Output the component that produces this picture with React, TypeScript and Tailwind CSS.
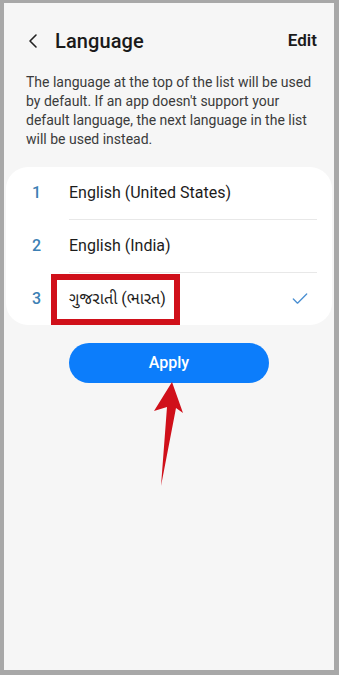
import { ChevronLeft, Check } from 'lucide-react'

const languages = [
  { n: 1, name: 'English (United States)' },
  { n: 2, name: 'English (India)' },
  { n: 3, name: 'ગુજરાતી (ભારત)', selected: true },
]

export default function App() {
  return (
    <div className="w-[339px] h-[675px] bg-[#a8a8a8] pt-[3px] pl-[4px] pr-[5px] pb-[5px] font-['Roboto','Noto_Sans','Noto_Sans_Gujarati',sans-serif]">
      <div className="relative h-full bg-[#f6f6f6] flex flex-col">
        {/* header */}
        <div className="flex items-center h-[42px] mt-[17px] pl-[19px] pr-[17px]">
          <ChevronLeft className="w-[24px] h-[24px] text-[#222] -ml-[2px]" strokeWidth={1.6} />
          <h1 className="ml-[10px] text-[20px] font-medium text-[#1a1a1a] tracking-[0.1px]">Language</h1>
          <span className="ml-auto text-[17px] font-semibold text-[#1a1a1a]">Edit</span>
        </div>

        <p className="mt-[11px] px-[22px] text-[14px] leading-[19px] text-[#3b3b3b]">
          The language at the top of the list will be used by default. If an app doesn't support your default
          language, the next language in the list will be used instead.
        </p>

        {/* list card */}
        <div className="mt-[18px] mx-[2px] bg-white rounded-[22px]">
          {languages.map((l, i) => (
            <div key={l.n}>
              {i > 0 && <div className="ml-[63px] mr-[15px] h-px bg-[#e8e8e8]" />}
              <div className="relative flex items-center h-[52px]">
                <span className="w-[63px] pl-[26px] text-[16px] font-medium text-[#3c7fb4]">{l.n}</span>
                <span className="text-[16px] text-[#1c1c1c]">{l.name}</span>
                {l.selected && (
                  <Check className="ml-auto mr-[22px] w-[20px] h-[20px] text-[#4a8fd2]" strokeWidth={1.6} />
                )}
                {l.selected && (
                  <div className="absolute left-[45px] top-[1px] w-[129px] h-[51px] border-[6px] border-[#d0101a]" />
                )}
              </div>
            </div>
          ))}
        </div>

        <div className="mt-[18px] flex justify-center">
          <button className="w-[200px] h-[40px] rounded-full bg-[#0c7dfb] text-white text-[16px] font-medium">
            Apply
          </button>
        </div>

        {/* annotation arrow */}
        <svg className="absolute left-0 top-0" width="330" height="667" viewBox="0 0 330 667">
          <polygon
            points="168,379 179,410 172,405 157,483 163,404 150,408"
            fill="#d0101a"
          />
        </svg>
      </div>
    </div>
  )
}
